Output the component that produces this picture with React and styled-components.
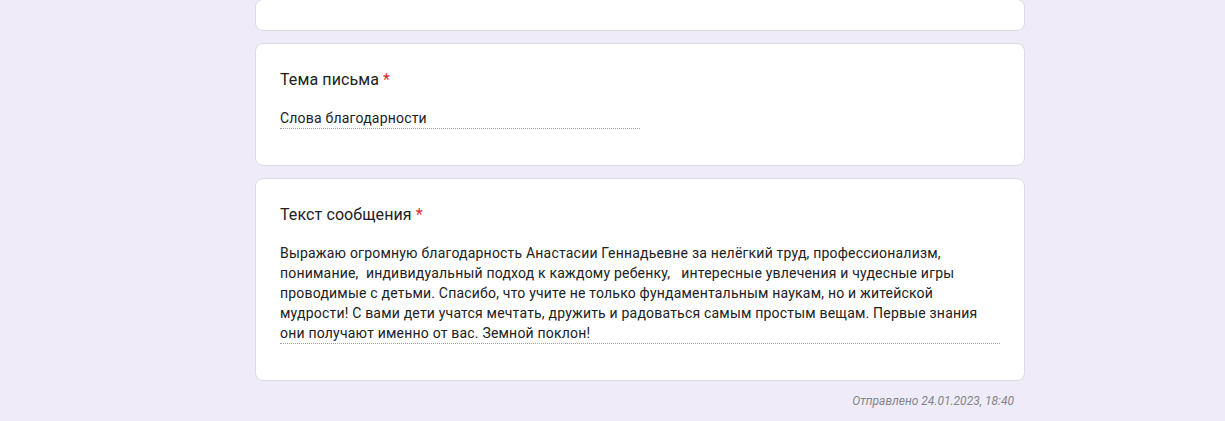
import React from 'react';
import styled, { createGlobalStyle } from 'styled-components';

const GlobalStyle = createGlobalStyle`
  html, body {
    margin: 0;
    padding: 0;
    background: #f0ebf8;
    font-family: Roboto, "Noto Sans", Arial, sans-serif;
    overflow: hidden;
  }
`;

const Page = styled.div`
  min-height: 421px;
  padding-left: 255px;
`;

const Column = styled.div`
  width: 770px;
  display: flex;
  flex-direction: column;
  gap: 12px;
`;

const Card = styled.div`
  background: #fff;
  border: 1px solid #dadce0;
  border-radius: 8px;
  padding: 24px 24px 36px;
`;

const ClippedCard = styled(Card)`
  height: 30px;
  margin-top: -1px;
  padding: 0;
`;

const Question = styled.div`
  font-size: 16px;
  line-height: 24px;
  color: #202124;
  letter-spacing: 0.1px;
  margin-bottom: 16px;
`;

const Star = styled.span`
  color: #d93025;
  margin-left: 4px;
`;

const Answer = styled.div`
  width: ${p => (p.$half ? '50%' : '100%')};
  font-size: 14px;
  line-height: 20px;
  color: #202124;
  letter-spacing: 0.2px;
  border-bottom: 1px dotted #9aa0a6;
  white-space: pre-wrap;
`;

const Footer = styled.div`
  width: 759px;
  display: flex;
  justify-content: flex-end;
  padding-top: 12px;
  font-size: 12px;
  line-height: 16px;
  font-style: italic;
  color: #80868b;
`;

const questions = [
  { title: 'Тема письма', answer: 'Слова благодарности', half: true },
  {
    title: 'Текст сообщения',
    answer:
      'Выражаю огромную благодарность Анастасии Геннадьевне за нелёгкий труд, профессионализм, понимание,  индивидуальный подход к каждому ребенку,   интересные увлечения и чудесные игры проводимые с детьми. Спасибо, что учите не только фундаментальным наукам, но и житейской мудрости! С вами дети учатся мечтать, дружить и радоваться самым простым вещам. Первые знания они получают именно от вас. Земной поклон!',
  },
];

const App = () => (
  <Page>
    <GlobalStyle />
    <Column>
      <ClippedCard />
      {questions.map((q, i) => (
        <Card key={i}>
          <Question>
            {q.title}
            <Star>*</Star>
          </Question>
          <Answer $half={q.half}>{q.answer}</Answer>
        </Card>
      ))}
    </Column>
    <Footer>Отправлено 24.01.2023, 18:40</Footer>
  </Page>
);

export default App;
